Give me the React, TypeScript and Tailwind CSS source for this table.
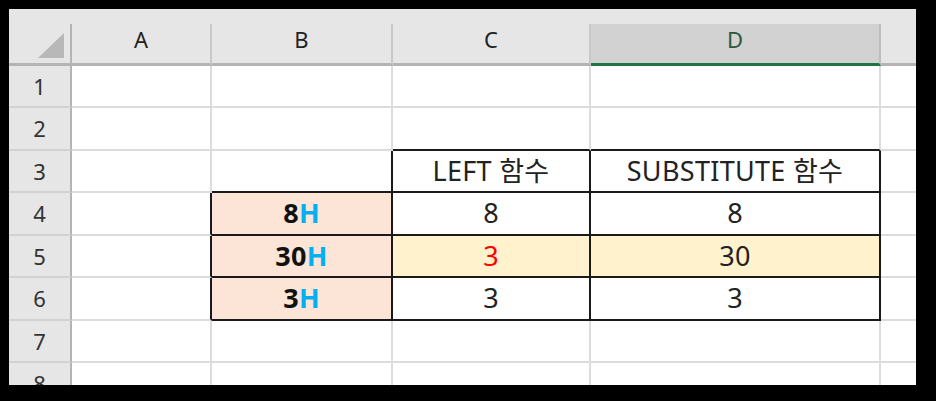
import React from "react";

const COLS = ["A", "B", "C", "D", ""];
const COL_W = ["w-[140px]", "w-[181px]", "w-[198px]", "w-[290px]", "w-[35px]"];
const ROW_H = ["h-[42px]", "h-[43px]", "h-[42px]", "h-[43px]", "h-[42px]", "h-[43px]", "h-[42px]", "h-[43px]"];

type Cell = { text?: React.ReactNode; bg?: string; cls?: string };

const H = ({ n }: { n: string }) => (
  <span className="font-bold text-[#111]">
    {n}
    <span className="text-[#00b0f0]">H</span>
  </span>
);

// row -> col index -> cell
const DATA: Record<number, Record<number, Cell>> = {
  3: { 2: { text: "LEFT 함수" }, 3: { text: "SUBSTITUTE 함수" } },
  4: { 1: { text: <H n="8" />, bg: "bg-[#fce4d6]" }, 2: { text: "8" }, 3: { text: "8" } },
  5: {
    1: { text: <H n="30" />, bg: "bg-[#fce4d6]" },
    2: { text: "3", bg: "bg-[#fff2cc]", cls: "text-[#ff0000]" },
    3: { text: "30", bg: "bg-[#fff2cc]" },
  },
  6: { 1: { text: <H n="3" />, bg: "bg-[#fce4d6]" }, 2: { text: "3" }, 3: { text: "3" } },
};

const inTable = (r: number, c: number) =>
  (c === 1 && r >= 4 && r <= 6) || ((c === 2 || c === 3) && r >= 3 && r <= 6);

export default function App() {
  return (
    <div className="w-[936px] h-[401px] bg-black pt-[9px] pl-[9px]">
      <div
        className="w-[907px] h-[376px] overflow-hidden bg-white text-[#222]"
        style={{ fontFamily: '"Noto Sans", "Noto Sans CJK KR", sans-serif' }}
      >
        {/* column headers */}
        <div className="bg-[#e6e6e6] pt-[15px] flex">
          <div className="w-[63px] h-[42px] border-r-2 border-b-[3px] border-[#b4b4b4] relative">
            <div
              className="absolute left-[29px] top-[9px] w-[26px] h-[25px] bg-[#b8b8b8]"
              style={{ clipPath: "polygon(100% 0, 100% 100%, 0 100%)" }}
            />
          </div>
          {COLS.map((c, i) => (
            <div
              key={i}
              className={`${COL_W[i]} h-[42px] flex items-center justify-center pb-[8px] text-[22px] ${
                c === "D"
                  ? "bg-[#d2d2d2] text-[#2a5a3a] border-b-[3px] border-b-[#217346] border-r-2 border-r-[#bdbdbd]"
                  : i === 4
                  ? "border-b-[3px] border-[#b4b4b4]"
                  : "border-r-2 border-r-[#c8c8c8] border-b-[3px] border-b-[#b4b4b4]"
              }`}
            >
              {c}
            </div>
          ))}
        </div>

        {ROW_H.map((h, ri) => {
          const r = ri + 1;
          return (
            <div key={r} className="flex">
              <div
                className={`w-[63px] ${h} bg-[#e6e6e6] border-r-2 border-r-[#b4b4b4] border-b-2 border-b-[#d2d2d2] flex items-center justify-center text-[22px] text-[#333]`}
              >
                {r}
              </div>
              {COLS.map((_, c) => {
                const cell = DATA[r]?.[c] ?? {};
                const right = inTable(r, c) || inTable(r, c + 1) ? "border-r-[#1a1a1a]" : "border-r-[#dcdcdc]";
                const bottom = inTable(r, c) || inTable(r + 1, c) ? "border-b-[#1a1a1a]" : "border-b-[#dcdcdc]";
                const last = c === 4;
                return (
                  <div
                    key={c}
                    className={`${COL_W[c]} ${h} ${last ? "" : "border-r-2"} border-b-2 ${right} ${bottom} ${
                      cell.bg ?? ""
                    } ${cell.cls ?? ""} flex items-center justify-center text-[27px] tracking-[0.3px] whitespace-nowrap`}
                  >
                    {cell.text}
                  </div>
                );
              })}
            </div>
          );
        })}
      </div>
    </div>
  );
}
